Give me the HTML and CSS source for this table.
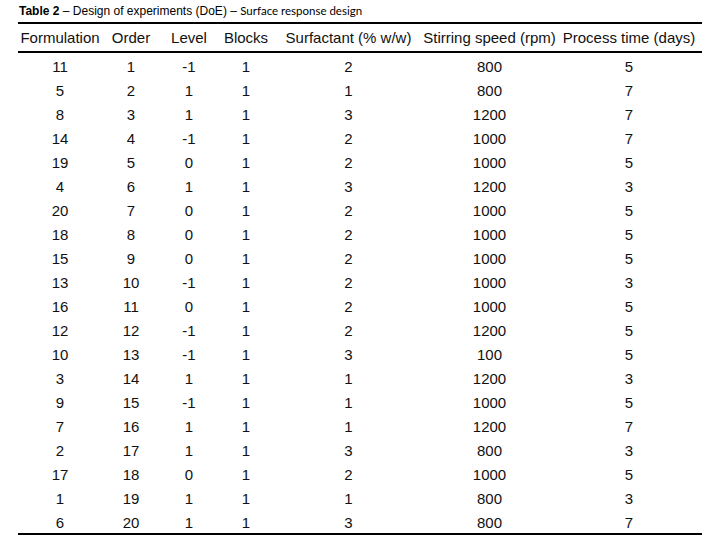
FILE: index.html
```html
<!DOCTYPE html>
<html lang="en">
<head>
<meta charset="utf-8">
<title>Table 2 – Design of experiments (DoE)</title>
<link rel="stylesheet" href="styles.css">
</head>
<body>
<div class="page">
  <p class="caption"><b class="label">Table 2</b> – Design of experiments (DoE) – <span class="sub">Surface response design</span></p>
  <table class="doe">
    <colgroup>
      <col class="c1"><col class="c2"><col class="c3"><col class="c4"><col class="c5"><col class="c6"><col class="c7">
    </colgroup>
    <thead>
      <tr><th>Formulation</th><th>Order</th><th>Level</th><th>Blocks</th><th>Surfactant (% w/w)</th><th>Stirring speed (rpm)</th><th>Process time (days)</th></tr>
    </thead>
    <tbody>
      <tr><td>11</td><td>1</td><td>-1</td><td>1</td><td>2</td><td>800</td><td>5</td></tr>
      <tr><td>5</td><td>2</td><td>1</td><td>1</td><td>1</td><td>800</td><td>7</td></tr>
      <tr><td>8</td><td>3</td><td>1</td><td>1</td><td>3</td><td>1200</td><td>7</td></tr>
      <tr><td>14</td><td>4</td><td>-1</td><td>1</td><td>2</td><td>1000</td><td>7</td></tr>
      <tr><td>19</td><td>5</td><td>0</td><td>1</td><td>2</td><td>1000</td><td>5</td></tr>
      <tr><td>4</td><td>6</td><td>1</td><td>1</td><td>3</td><td>1200</td><td>3</td></tr>
      <tr><td>20</td><td>7</td><td>0</td><td>1</td><td>2</td><td>1000</td><td>5</td></tr>
      <tr><td>18</td><td>8</td><td>0</td><td>1</td><td>2</td><td>1000</td><td>5</td></tr>
      <tr><td>15</td><td>9</td><td>0</td><td>1</td><td>2</td><td>1000</td><td>5</td></tr>
      <tr><td>13</td><td>10</td><td>-1</td><td>1</td><td>2</td><td>1000</td><td>3</td></tr>
      <tr><td>16</td><td>11</td><td>0</td><td>1</td><td>2</td><td>1000</td><td>5</td></tr>
      <tr><td>12</td><td>12</td><td>-1</td><td>1</td><td>2</td><td>1200</td><td>5</td></tr>
      <tr><td>10</td><td>13</td><td>-1</td><td>1</td><td>3</td><td>100</td><td>5</td></tr>
      <tr><td>3</td><td>14</td><td>1</td><td>1</td><td>1</td><td>1200</td><td>3</td></tr>
      <tr><td>9</td><td>15</td><td>-1</td><td>1</td><td>1</td><td>1000</td><td>5</td></tr>
      <tr><td>7</td><td>16</td><td>1</td><td>1</td><td>1</td><td>1200</td><td>7</td></tr>
      <tr><td>2</td><td>17</td><td>1</td><td>1</td><td>3</td><td>800</td><td>3</td></tr>
      <tr><td>17</td><td>18</td><td>0</td><td>1</td><td>2</td><td>1000</td><td>5</td></tr>
      <tr><td>1</td><td>19</td><td>1</td><td>1</td><td>1</td><td>800</td><td>3</td></tr>
      <tr><td>6</td><td>20</td><td>1</td><td>1</td><td>3</td><td>800</td><td>7</td></tr>
    </tbody>
  </table>
</div>
</body>
</html>
```
FILE: styles.css
```css
html, body {
  margin: 0;
  padding: 0;
  background: #ffffff;
}

.page {
  padding: 3px 18px 0 18px;
  font-family: "Liberation Sans", Arial, sans-serif;
  color: #111111;
}

.caption {
  margin: 0 0 3px 1px;
  font-size: 12px;
  line-height: 15px;
  white-space: nowrap;
  color: #000000;
}

.caption .label {
  font-weight: bold;
}

.caption .sub {
  font-family: "Lato", "Liberation Sans", sans-serif;
  font-size: 11.5px;
}

.doe {
  width: 684px;
  table-layout: fixed;
  border-collapse: separate;
  border-spacing: 0;
  font-size: 15px;
}

.c1 { width: 84px; }
.c2 { width: 58px; }
.c3 { width: 58px; }
.c4 { width: 56px; }
.c5 { width: 149px; }
.c6 { width: 133px; }
.c7 { width: 146px; }

.doe th {
  font-weight: normal;
  text-align: center;
  white-space: nowrap;
  padding: 0;
  line-height: 27px;
  border-top: 2px solid #000000;
  border-bottom: 2px solid #000000;
}

.doe td {
  text-align: center;
  padding: 3px 0 0 0;
  line-height: 21px;
  white-space: nowrap;
}

.doe tbody tr:last-child td {
  border-bottom: 2px solid #000000;
}
```
